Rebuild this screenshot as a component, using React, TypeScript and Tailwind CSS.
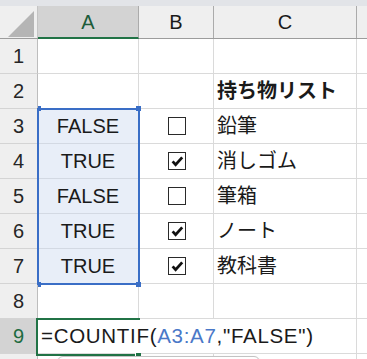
import React from "react";

const FONT = "font-['Liberation_Sans','Noto_Sans_CJK_JP',sans-serif]";

function Check({ checked }: { checked: boolean }) {
  return (
    <div className="w-[18px] h-[18px] border-[1.5px] border-[#2a2a2a] bg-white flex items-center justify-center">
      {checked && (
        <svg width="15" height="15" viewBox="0 0 15 15">
          <path d="M2.6 7.4 L5.6 10.6 L12.2 3.4" fill="none" stroke="#111" strokeWidth="2.8" strokeLinejoin="miter" />
        </svg>
      )}
    </div>
  );
}

type Row = { n: number; a?: string; b?: boolean | null; c?: string; bold?: boolean };

const rows: Row[] = [
  { n: 1 },
  { n: 2, c: "持ち物リスト", bold: true },
  { n: 3, a: "FALSE", b: false, c: "鉛筆" },
  { n: 4, a: "TRUE", b: true, c: "消しゴム" },
  { n: 5, a: "FALSE", b: false, c: "筆箱" },
  { n: 6, a: "TRUE", b: true, c: "ノート" },
  { n: 7, a: "TRUE", b: true, c: "教科書" },
  { n: 8 },
];

export default function App() {
  return (
    <div className={`relative w-[367px] h-[359px] overflow-hidden bg-white text-[20px] text-[#1a1a1a] ${FONT}`}>
      <div className="h-[6px] bg-[#e2e4e8]" />
      {/* header */}
      <div className="flex h-[33px] bg-[#efefef] border-b border-[#9c9c9c]">
        <div className="w-[38px] shrink-0 border-r border-[#c4c4c4] relative">
          <svg className="absolute left-[8px] top-[5px]" width="26" height="26" viewBox="0 0 26 26">
            <polygon points="26,0 26,26 0,26" fill="#b5b5b5" />
          </svg>
        </div>
        <div className="w-[101px] shrink-0 bg-[#d3d3d3] border-r border-[#ababab] border-b-2 border-b-[#217346] -mb-px flex items-center justify-center text-[#1d5c39]">A</div>
        <div className="w-[75px] shrink-0 border-r border-[#ababab] flex items-center justify-center">B</div>
        <div className="w-[143px] shrink-0 border-r border-[#ababab] flex items-center justify-center">C</div>
        <div className="flex-1" />
      </div>
      {rows.map((r) => {
        const sel = r.n >= 3 && r.n <= 7;
        return (
          <div key={r.n} className="flex h-[35px]">
            <div className="w-[38px] shrink-0 bg-[#efefef] border-r border-[#bdbdbd] border-b border-b-[#d4d4d4] flex items-center justify-center text-[#262626]">
              {r.n}
            </div>
            <div className={`w-[101px] shrink-0 border-r border-b border-[#dadada] flex items-center justify-center ${sel ? "bg-[#e8eef8] border-b-[#d3d9e3]" : ""}`}>
              {r.a}
            </div>
            <div className="w-[75px] shrink-0 border-r border-b border-[#dadada] flex items-center justify-center pl-[2px]">
              {r.b !== undefined && r.b !== null && <Check checked={r.b} />}
            </div>
            <div className={`w-[143px] shrink-0 border-r border-b border-[#dadada] flex items-center pl-[3px] ${r.bold ? "font-bold" : ""}`}>
              {r.c}
            </div>
            <div className="flex-1 border-b border-[#dadada]" />
          </div>
        );
      })}
      {/* row 9 */}
      <div className="flex h-[35px]">
        <div className="w-[38px] shrink-0 bg-[#d3d3d3] border-r border-[#bdbdbd] border-b border-b-[#d4d4d4] flex items-center justify-center text-[#1d6b3f]">
          9
        </div>
        <div className="w-[319px] shrink-0 border-r border-b border-[#dadada] flex items-center pl-[3px] whitespace-nowrap text-[20.5px] tracking-[0.7px]">
          <span>=COUNTIF(</span>
          <span className="text-[#4a78c8]">A3:A7</span>
          <span>,"FALSE")</span>
        </div>
        <div className="flex-1 border-b border-[#dadada]" />
      </div>
      <div className="flex h-[10px]">
        <div className="w-[38px] shrink-0 bg-[#efefef] border-r border-[#bdbdbd]" />
        <div className="w-[101px] shrink-0 border-r border-[#dadada]" />
        <div className="w-[75px] shrink-0 border-r border-[#dadada]" />
        <div className="w-[143px] shrink-0 border-r border-[#dadada]" />
      </div>

      {/* selection overlay A3:A7 */}
      <div className="absolute left-[37px] top-[108px] w-[103px] h-[177px] border-2 border-[#3a6ec6] pointer-events-none" />
      <div className="absolute left-[38px] top-[106px] w-[3px] h-[5px] bg-[#3a6ec6]" />
      <div className="absolute left-[136px] top-[106px] w-[5px] h-[5px] bg-[#3a6ec6]" />
      <div className="absolute left-[38px] top-[282px] w-[3px] h-[5px] bg-[#3a6ec6]" />
      <div className="absolute left-[136px] top-[282px] w-[5px] h-[5px] bg-[#3a6ec6]" />

      {/* active cell A9 */}
      <div className="absolute left-[36px] top-[318px] w-[104px] h-[38px] border-2 border-r-0 border-[#217346] pointer-events-none" />
      <div className="absolute left-[135px] top-[352px] w-[6px] h-[6px] bg-[#217346] border-l border-t border-white" />

      {/* autocomplete tooltip */}
      <div className="absolute left-[57px] top-[356px] w-[203px] h-[30px] rounded-md border border-[#c3c3c3] bg-white shadow-sm" />
    </div>
  );
}
